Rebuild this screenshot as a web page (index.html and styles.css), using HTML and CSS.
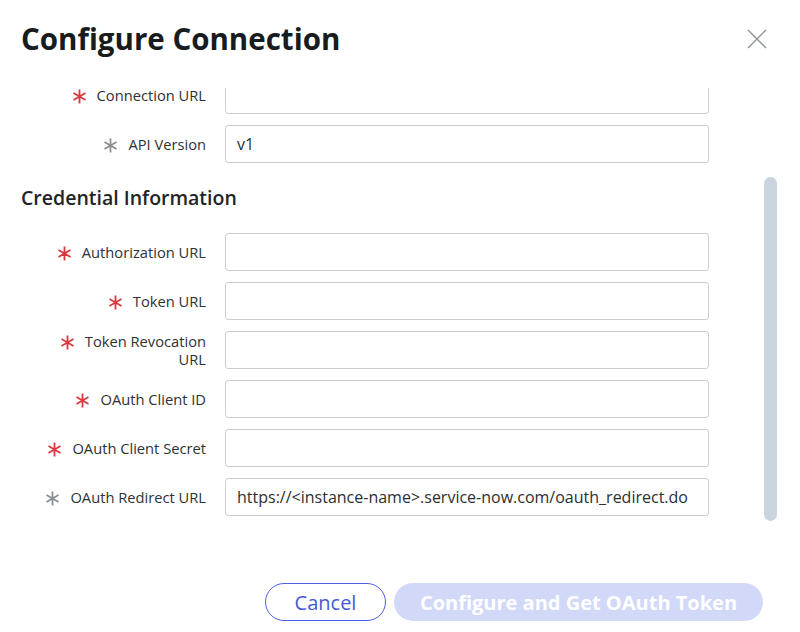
FILE: index.html
```html
<!DOCTYPE html>
<html lang="en">
<head>
  <meta charset="UTF-8" />
  <meta name="viewport" content="width=device-width, initial-scale=1.0"/>
  <title>Configure Connection</title>
  <link rel="stylesheet" href="styles.css">
</head>
<body>
  <div class="modal">
    <div class="modal-header">
      <h1>Configure Connection</h1>
      <button class="close-btn" aria-label="Close">
        <svg width="20" height="20" viewBox="0 0 20 20"><path d="M1 1L19 19M19 1L1 19" stroke="#8e9696" stroke-width="1.4" fill="none"/></svg>
      </button>
    </div>

    <div class="modal-body">
      <div class="scroll-content">
        <div class="field">
          <label><span class="req"></span><span class="txt">Connection URL</span></label>
          <input type="text">
        </div>
        <div class="field">
          <label><span class="req opt"></span><span class="txt">API Version</span></label>
          <input type="text" value="v1">
        </div>

        <h3>Credential Information</h3>

        <div class="field">
          <label><span class="req"></span><span class="txt">Authorization URL</span></label>
          <input type="text">
        </div>
        <div class="field">
          <label><span class="req"></span><span class="txt">Token URL</span></label>
          <input type="text">
        </div>
        <div class="field">
          <label><span class="req"></span><span class="txt">Token Revocation<br>URL</span></label>
          <input type="text">
        </div>
        <div class="field">
          <label><span class="req"></span><span class="txt">OAuth Client ID</span></label>
          <input type="text">
        </div>
        <div class="field">
          <label><span class="req"></span><span class="txt">OAuth Client Secret</span></label>
          <input type="password">
        </div>
        <div class="field">
          <label><span class="req opt"></span><span class="txt">OAuth Redirect URL</span></label>
          <input type="text" value="https://<instance-name>.service-now.com/oauth_redirect.do">
        </div>
      </div>
      <div class="scroll-thumb"></div>
    </div>

    <div class="modal-footer">
      <button class="btn-cancel">Cancel</button>
      <button class="btn-primary" disabled>Configure and Get OAuth Token</button>
    </div>
  </div>
</body>
</html>
```

FILE: styles.css
```css
body {
  margin: 0;
  background: #fff;
  font-family: "Open Sans", "Noto Sans", sans-serif;
  color: #2b2f31;
}
.modal {
  width: 800px;
  height: 632px;
}
.modal-header {
  display: flex;
  justify-content: space-between;
  align-items: flex-start;
  padding: 16px 33px 0 21px;
  height: 72px;
}
.modal-header h1 {
  margin: 0;
  font-size: 29.5px;
  font-weight: 700;
  line-height: 44px;
  padding-top: 1px;
  color: #181c1e;
}
.close-btn {
  margin-top: 13px;
  padding: 0;
  border: none;
  background: none;
  width: 20px;
  height: 20px;
  cursor: pointer;
}
.close-btn svg { display: block; }

/* scrolled form area */
.modal-body {
  position: relative;
  height: 457px;
  overflow: hidden;
}
.scroll-content {
  margin-top: -12px;
  width: 709px;
}
.scroll-thumb {
  position: absolute;
  left: 764px;
  top: 89px;
  width: 13px;
  height: 344px;
  border-radius: 7px;
  background: #c9d4df;
}
.modal-body h3 {
  margin: 21px 0 22px 21px;
  font-size: 19.5px;
  font-weight: 600;
  line-height: 27px;
  color: #1f2426;
}
.field {
  display: grid;
  grid-template-columns: 206px 484px;
  column-gap: 19px;
  align-items: center;
  margin-bottom: 11px;
}
.field label {
  display: flex;
  justify-content: flex-end;
  align-items: flex-start;
  gap: 10px;
  font-size: 14.7px;
  line-height: 18px;
  color: #2e3234;
}
.field .txt {
  text-align: right;
}
.req {
  flex: none;
  width: 15px;
  height: 15px;
  margin-top: 3px;
  background: url("data:image/svg+xml,%3Csvg xmlns='http://www.w3.org/2000/svg' viewBox='0 0 14 14'%3E%3Cpath d='M7 0.5V13.5M1.4 3.75L12.6 10.25M12.6 3.75L1.4 10.25' stroke='%23d8393f' stroke-width='1.7' fill='none'/%3E%3C/svg%3E") no-repeat center / 15px 15px;
}
.req.opt {
  background-image: url("data:image/svg+xml,%3Csvg xmlns='http://www.w3.org/2000/svg' viewBox='0 0 14 14'%3E%3Cpath d='M7 0.5V13.5M1.4 3.75L12.6 10.25M12.6 3.75L1.4 10.25' stroke='%23878d90' stroke-width='1.6' fill='none'/%3E%3C/svg%3E");
}
.field input {
  box-sizing: border-box;
  width: 484px;
  height: 38px;
  margin: 0;
  padding: 0 11px;
  border: 1px solid #cdcdcd;
  border-radius: 3px;
  font-family: inherit;
  font-size: 16px;
  color: #2b2f31;
  outline: none;
}

.modal-footer {
  display: flex;
  justify-content: flex-end;
  gap: 8px;
  padding: 38px 37px 0 0;
}
.modal-footer button {
  height: 38px;
  border-radius: 19px;
  font-family: inherit;
  font-size: 20px;
  cursor: pointer;
}
.btn-cancel {
  width: 121px;
  border: 1.5px solid #4d5fe3;
  background: #fff;
  color: #4459d9;
}
.btn-primary {
  width: 369px;
  border: none;
  background: #d2d9f8;
  color: #fff;
  font-weight: 700;
  font-size: 19.7px;
}
```
